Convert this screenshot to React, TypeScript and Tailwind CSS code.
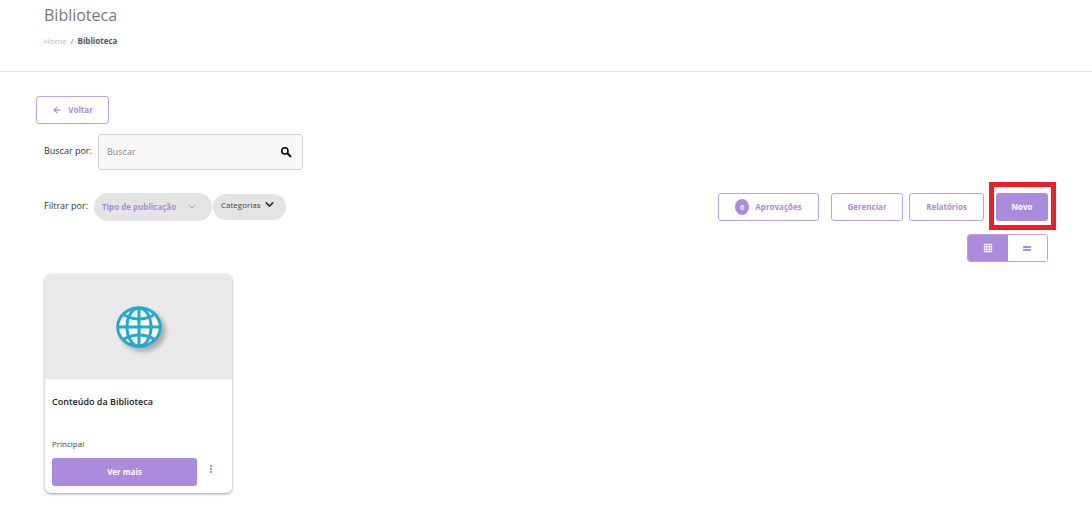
import { useState } from "react";
import type { ReactNode } from "react";
import { ArrowLeft, ChevronDown } from "lucide-react";
import { MdGridOn } from "react-icons/md";

const outline =
  "flex h-7 items-center justify-center rounded-[3px] border border-[#bd9fe8] bg-white text-[8px] font-bold text-[#ac8bdd]";

function GlobeIcon() {
  return (
    <svg
      viewBox="0 0 46 42"
      className="h-[42px] w-[46px] drop-shadow-[4px_4px_2px_rgba(0,0,0,0.25)]"
      fill="none"
      stroke="#22a9cc"
      strokeWidth="3"
      aria-hidden="true"
    >
      <ellipse cx="23" cy="21" rx="21.3" ry="19.3" fill="#fff" />
      <ellipse cx="23" cy="21" rx="12" ry="19" />
      <path d="M23 2v38M2 21h42" />
      <path d="M8 9q15 8 30 0M8 33q15 -8 30 0" />
    </svg>
  );
}

function SearchIcon() {
  return (
    <svg viewBox="0 0 12 12" className="h-3 w-3" fill="none" stroke="currentColor" aria-hidden="true">
      <circle cx="4.9" cy="4.9" r="3.1" strokeWidth="1.5" />
      <path d="M7.3 7.3l3.6 3.6" strokeWidth="2" />
    </svg>
  );
}

function ListIcon() {
  return (
    <svg viewBox="0 0 8 5" className="h-[5px] w-2" fill="currentColor" shapeRendering="crispEdges" aria-hidden="true">
      <path d="M0 0h1v2H0zM1 0h7v2H1zM0 3h1v2H0zM1 3h7v2H1z" />
    </svg>
  );
}

function DotsIcon() {
  return (
    <svg viewBox="0 0 10 10" className="h-2.5 w-2.5" fill="currentColor" aria-hidden="true">
      <path d="M4 1h2v2H4zM4 4h2v2H4zM4 7h2v2H4z" />
    </svg>
  );
}

function ViewButton({ label, active, onClick, children }: {
  label: string;
  active: boolean;
  onClick: () => void;
  children: ReactNode;
}) {
  return (
    <button
      type="button"
      aria-label={label}
      aria-pressed={active}
      onClick={onClick}
      className={`flex flex-1 items-center justify-center ${active ? "bg-[#ac8bdd] text-white" : "bg-white text-[#ac8bdd]"}`}
    >
      {children}
    </button>
  );
}

export default function App() {
  const [view, setView] = useState<"grid" | "list">("grid");

  return (
    <div className="min-h-screen bg-white font-['Open_Sans',sans-serif] text-[#333]">
      <header className="border-b border-[#e4e4e4] px-11 pt-1 pb-6">
        <h1 className="text-base leading-[22px] text-[#777]">Biblioteca</h1>
        <nav aria-label="Breadcrumb" className="mt-[9px] flex gap-1 text-[8px] leading-3">
          <a href="#" className="text-[#c8a9f2]">Home</a>
          <span className="text-[#777]">/</span>
          <span className="font-bold text-[#555]">Biblioteca</span>
        </nav>
      </header>

      <main className="pt-6 pr-11 pb-5 pl-9">
        <button type="button" className={`${outline} w-[73px] gap-1.5`}>
          <ArrowLeft size={10} strokeWidth={3} />
          Voltar
        </button>

        {/* Search */}
        <div className="mt-2.5 flex items-center pl-2">
          <label htmlFor="search" className="w-[54px] pb-0.5 text-[9px]">Buscar por:</label>
          <div className="flex h-9 w-[205px] items-center rounded-[3px] border border-[#d6d6d6] bg-[#f9f7f9] pr-2.5 pl-2">
            <input
              id="search"
              type="text"
              placeholder="Buscar"
              className="min-w-0 flex-1 bg-transparent text-[9px] outline-none placeholder:text-[#888]"
            />
            <button type="button" aria-label="Pesquisar" className="text-black">
              <SearchIcon />
            </button>
          </div>
        </div>

        {/* Filters and actions */}
        <div className="mt-[23px] flex items-center justify-between pl-2">
          <div className="flex items-center">
            <span className="w-[50px] pb-0.5 text-[9px]">Filtrar por:</span>
            <div className="relative h-7 w-[118px]">
              <select
                aria-label="Tipo de publicação"
                className="block h-7 w-full appearance-none rounded-full bg-[#e4e4e4] pl-2 text-[8px] font-bold text-[#ac8bdd]"
              >
                <option>Tipo de publicação</option>
              </select>
              <ChevronDown
                size={8}
                strokeWidth={3}
                className="pointer-events-none absolute top-2.5 right-4 text-[#ac8bdd]"
              />
            </div>
            <div className="relative ml-px h-[26px] w-[73px]">
              <select
                aria-label="Categorias"
                className="block h-[26px] w-full appearance-none rounded-full bg-[#e4e4e4] pb-1 pl-2 text-[8px] text-[#444]"
              >
                <option>Categorias</option>
              </select>
              <ChevronDown
                size={13}
                strokeWidth={3}
                className="pointer-events-none absolute top-1 right-2.5 text-[#333]"
              />
            </div>
          </div>

          <div className="flex items-center">
            <button type="button" className={`${outline} w-[101px] gap-1.5`}>
              <span className="flex h-4 w-3.5 items-center justify-center rounded-[50%] bg-[#ac8bdd] text-[7px] leading-none text-white">
                0
              </span>
              Aprovações
            </button>
            <button type="button" className={`${outline} ml-3 w-[72px]`}>Gerenciar</button>
            <button type="button" className={`${outline} ml-1.5 w-[75px]`}>Relatórios</button>
            <div className="relative ml-3">
              <button
                type="button"
                className="block h-7 w-[52px] rounded-[3px] bg-[#ac8bdd] text-[8px] font-bold text-white"
              >
                Novo
              </button>
              {/* Highlight frame */}
              <div className="pointer-events-none absolute -top-[11px] -right-2 -bottom-[9px] -left-[7px] border-[5px] border-[#ee1c24]" />
            </div>
          </div>
        </div>

        {/* View switch */}
        <div className="mt-[13px] flex justify-end">
          <div className="flex h-7 w-[81px] overflow-hidden rounded-[3px] border border-[#bd9fe8]">
            <ViewButton label="Grade" active={view === "grid"} onClick={() => setView("grid")}>
              <MdGridOn size={10} />
            </ViewButton>
            <ViewButton label="Lista" active={view === "list"} onClick={() => setView("list")}>
              <ListIcon />
            </ViewButton>
          </div>
        </div>

        <article className="mt-3 ml-[9px] w-[187px] overflow-hidden rounded-md bg-white shadow-[0_1px_3px_rgba(0,0,0,0.4)]">
          <div className="flex h-[105px] items-center justify-center bg-[#e9e9e9]">
            <GlobeIcon />
          </div>
          <div className="px-[7px] pt-[15px] pb-[7px]">
            <h2 className="text-[9px] leading-4 font-semibold text-[#222]">Conteúdo da Biblioteca</h2>
            <p className="mt-7 text-[8px] leading-3 text-[#444]">Principal</p>
            <div className="mt-2 flex items-start">
              <button type="button" className="h-7 w-[145px] rounded-[3px] bg-[#ac8bdd] text-[8px] font-bold text-white">
                Ver mais
              </button>
              <button type="button" aria-label="Mais opções" className="mt-1.5 ml-[9px] text-[#ac8bdd]">
                <DotsIcon />
              </button>
            </div>
          </div>
        </article>
      </main>
    </div>
  );
}
